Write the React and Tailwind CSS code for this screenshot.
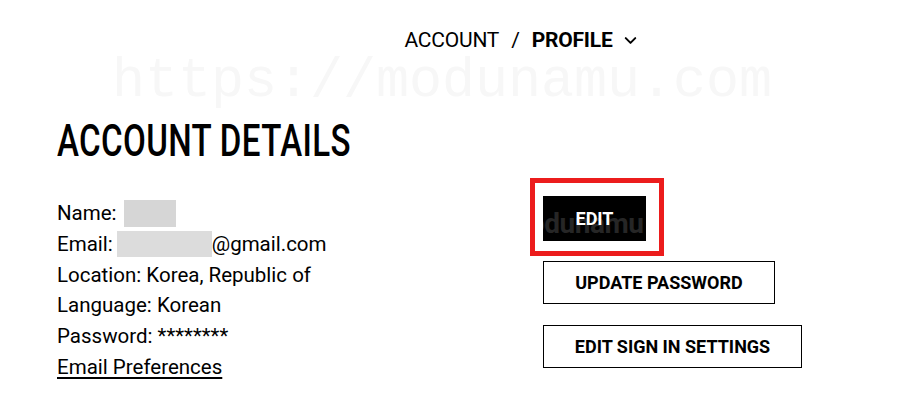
import { ChevronDown } from 'lucide-react';

function App() {
  return (
    <div className="relative w-[904px] h-[416px] overflow-hidden bg-white text-black font-['Roboto',sans-serif]">
      {/* watermark */}
      <div className="absolute left-[112px] top-[42px] text-[55px] leading-[80px] font-['Liberation_Mono',monospace] text-[#f7f7f7] select-none pointer-events-none">
        https://modunamu.com
      </div>

      <div className="relative flex justify-center pt-[28px] pl-[140px]">
        <div className="flex items-center text-[21px] leading-[24px] tracking-[-0.2px]">
          <span>ACCOUNT</span>
          <span className="mx-[12px]">/</span>
          <span className="font-bold">PROFILE</span>
          <ChevronDown className="ml-[8px] w-[19px] h-[19px]" strokeWidth={2.5} />
        </div>
      </div>

      <div className="relative flex pl-[57px] pt-[65px]">
        <div className="w-[473px]">
          <h1 className="origin-left scale-x-[0.735] text-[45px] leading-[48px] font-medium whitespace-nowrap tracking-[0.5px]">
            ACCOUNT DETAILS
          </h1>
          <div className="mt-[33px] text-[20.5px] leading-[30.8px]">
            <div className="flex items-center">
              Name:
              <span className="ml-[7px] inline-block w-[52px] h-[27px] bg-[#d6d6d6]" />
            </div>
            <div className="flex items-center">
              Email:
              <span className="ml-[4px] inline-block w-[95px] h-[26px] bg-[#dcdcdc]" />
              @gmail.com
            </div>
            <div>Location: Korea, Republic of</div>
            <div>Language: Korean</div>
            <div>Password: ********</div>
            <a href="#" className="underline underline-offset-[3px]">Email Preferences</a>
          </div>
        </div>

        <div className="flex flex-col items-start pt-[61px]">
          <div className="border-[5px] border-[#ec1c1c] pl-[8px] pr-[13px] pt-[13px] pb-[10px]">
            <button className="relative overflow-hidden w-[103px] h-[45px] bg-black text-white text-[18px] font-bold">
              <span className="absolute left-[-14px] top-[13px] text-[28px] leading-[30px] font-bold text-[#262626] tracking-[-0.5px]">
                odunamu
              </span>
              <span className="relative">EDIT</span>
            </button>
          </div>
          <button className="ml-[13px] mt-[5px] w-[232px] h-[43px] border-[1.5px] border-black text-[18px] font-bold">
            UPDATE PASSWORD
          </button>
          <button className="ml-[13px] mt-[21px] w-[259px] h-[43px] border-[1.5px] border-black text-[18px] font-bold">
            EDIT SIGN IN SETTINGS
          </button>
        </div>
      </div>
    </div>
  );
}

export default App;
